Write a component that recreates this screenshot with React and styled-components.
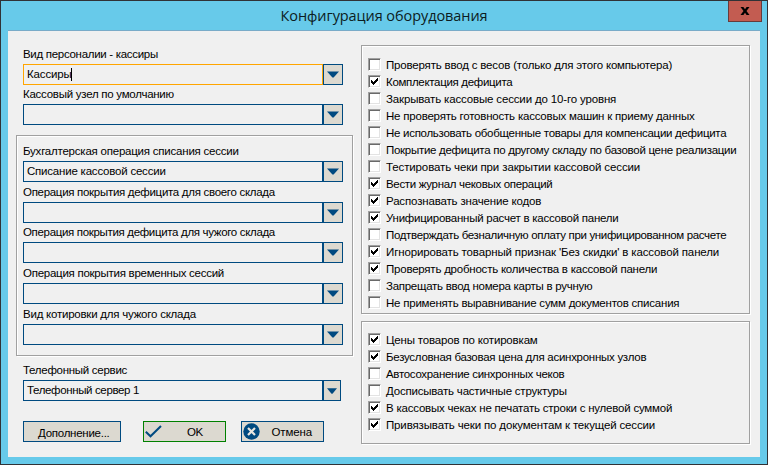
import React from 'react';
import styled, { createGlobalStyle } from 'styled-components';

const Global = createGlobalStyle`
  *, *::before, *::after { box-sizing: border-box; }
  html, body { margin: 0; padding: 0; overflow: hidden; }
`;

const Window = styled.div`
  display: flex;
  flex-direction: column;
  width: 768px;
  height: 465px;
  padding: 0 7px 7px;
  background: #67caea;
  border: 1px solid #303236;
  font: 11.5px/16px "Liberation Sans", Arial, sans-serif;
  color: #000;
`;

const TitleBar = styled.header`
  display: flex;
  justify-content: flex-end;
  align-items: flex-start;
  flex: none;
  height: 29px;
`;

const Title = styled.h1`
  flex: 1;
  margin: 0;
  padding: 4px 0 0 32px;
  text-align: center;
  font: 400 14.5px/22px "Open Sans", "Noto Sans", sans-serif;
  letter-spacing: -0.08px;
  color: #0c1c22;
`;

const CloseButton = styled.button`
  display: flex;
  align-items: center;
  justify-content: center;
  width: 34px;
  height: 21px;
  margin-right: -2px;
  padding: 0 0 1px;
  background: #c35c51;
  border: 1px solid #673b3c;
  border-top: 0;
`;

const Client = styled.main`
  display: flex;
  flex: 1;
  padding: 0 9px 0 8px;
  background: #f0f0f0;
  border-top: 1px solid #79abc8;
`;

const LeftColumn = styled.section`
  display: flex;
  flex-direction: column;
  width: 338px;
  margin-right: 7px;
  padding-top: 16px;
`;

const RightColumn = styled.section`
  display: flex;
  flex-direction: column;
  gap: 6px;
  width: 390px;
  padding-top: 14px;
`;

const FieldStack = styled.div`
  padding-left: 7px;
`;

const Frame = styled.div`
  border: 1px solid #a0a0a0;
  box-shadow: inset 1px 1px 0 #fff, 1px 1px 0 #fff;
`;

const FieldGroup = styled(Frame)`
  width: 337px;
  height: 221px;
  margin-top: 10px;
  padding: 8px 0 0 6px;
`;

const OptionGroup = styled(Frame)`
  width: 389px;
  height: ${(p) => p.$height}px;
  margin-bottom: 1px;
  padding: ${(p) => p.$top}px 0 0 6px;
`;

const Field = styled.div`
  margin-top: ${(p) => p.$gap ?? 3}px;
`;

const Text = styled.span`
  display: block;
  height: 16px;
  line-height: 16px;
  white-space: nowrap;
  letter-spacing: ${(p) => p.$track ?? 0}px;
`;

const Label = styled(Text)`
  margin-bottom: 1px;
  line-height: 14px;
`;

const OptionText = styled(Text)`
  line-height: 14px;
`;

const Combo = styled.div`
  display: flex;
  height: 21px;
`;

const Input = styled.div`
  display: flex;
  align-items: center;
  width: 300px;
  padding: 0 0 1px 3px;
  border: 1px solid ${(p) => (p.$focused ? '#ffa500' : '#004a80')};
`;

const Caret = styled.i`
  width: 1px;
  height: 13px;
  margin-left: -1px;
  background: #000;
`;

const DropButton = styled.button`
  display: flex;
  align-items: center;
  justify-content: center;
  width: ${(p) => (p.$narrow ? 18 : 20)}px;
  padding: 0;
  background: #dcd9d0;
  border: 1px solid #004a80;
`;

const Option = styled.label`
  display: flex;
  align-items: flex-start;
  height: 17px;
`;

const CheckBox = styled.span`
  width: 13px;
  height: 13px;
  margin-right: 5px;
  background: #fff;
  border: 1px solid;
  border-color: #a0a0a0 #fff #fff #a0a0a0;
  box-shadow: inset 1px 1px 0 #696969, inset -1px -1px 0 #e3e3e3;

  svg { display: block; }
`;

const Buttons = styled.div`
  display: flex;
  margin: 20px 0 0 7px;
`;

const PushButton = styled.button`
  display: flex;
  align-items: center;
  width: ${(p) => p.$width}px;
  height: 21px;
  margin-right: ${(p) => p.$after ?? 0}px;
  padding: ${(p) => (p.$down ? 3 : 1)}px 0 0 ${(p) => p.$indent}px;
  background: #dcd9d0;
  border: 1px solid ${(p) => (p.$accept ? '#008000' : '#004a80')};
  font: inherit;
  color: #000;
`;

const ButtonIcon = styled.svg`
  flex: none;
  display: block;
  margin: -1px ${(p) => p.$gap}px 0 0;
`;

const topFields = [
  { label: 'Вид персоналии - кассиры', track: -0.3, value: 'Кассиры', valueTrack: -0.15, focused: true, gap: 0 },
  { label: 'Кассовый узел по умолчанию', track: -0.26, gap: 2 },
];

const groupFields = [
  { label: 'Бухгалтерская операция списания сессии', track: -0.22, value: 'Списание кассовой сессии', valueTrack: -0.21, gap: 0 },
  { label: 'Операция покрытия дефицита для своего склада', track: -0.3, gap: 3 },
  { label: 'Операция покрытия дефицита для чужого склада', track: -0.33, gap: 2 },
  { label: 'Операция покрытия временных сессий', track: -0.26, gap: 3 },
  { label: 'Вид котировки для чужого склада', track: -0.23, gap: 3 },
];

const phoneField = {
  label: 'Телефонный сервис', track: -0.28, value: 'Телефонный сервер 1', valueTrack: -0.36, narrow: true, gap: 7,
};

const sessionOptions = [
  ['Проверять ввод с весов (только для этого компьютера)', false, -0.185],
  ['Комплектация дефицита', true, -0.32],
  ['Закрывать кассовые сессии до 10-го уровня', false, -0.155],
  ['Не проверять готовность кассовых машин к приему данных', false, -0.21],
  ['Не использовать обобщенные товары для компенсации дефицита', false, -0.285],
  ['Покрытие дефицита по другому складу по базовой цене реализации', false, -0.285],
  ['Тестировать чеки при закрытии кассовой сессии', false, -0.125],
  ['Вести журнал чековых операций', true, -0.32],
  ['Распознавать значение кодов', true, -0.16],
  ['Унифицированный расчет в кассовой панели', true, -0.245],
  ['Подтверждать безналичную оплату при унифицированном расчете', false, -0.345],
  ["Игнорировать товарный признак 'Без скидки' в кассовой панели", true, -0.14],
  ['Проверять дробность количества в кассовой панели', true, -0.225],
  ['Запрещать ввод номера карты в ручную', false, -0.275],
  ['Не применять выравнивание сумм документов списания', false, -0.22],
];

const priceOptions = [
  ['Цены товаров по котировкам', true, -0.17],
  ['Безусловная базовая цена для асинхронных узлов', true, -0.275],
  ['Автосохранение синхронных чеков', false, -0.31],
  ['Досписывать частичные структуры', false, -0.205],
  ['В кассовых чеках не печатать строки с нулевой суммой', true, -0.215],
  ['Привязывать чеки по документам к текущей сессии', true, -0.145],
];

function ComboField({ label, track, value, valueTrack, focused, narrow, gap }) {
  return (
    <Field $gap={gap}>
      <Label $track={track}>{label}</Label>
      <Combo>
        <Input $focused={focused}>
          {value && <Text $track={valueTrack}>{value}</Text>}
          {focused && <Caret />}
        </Input>
        <DropButton $narrow={narrow}>
          <svg width={narrow ? 10 : 12} height={narrow ? 6 : 7} viewBox="0 0 12 7" preserveAspectRatio="none">
            <path d="M0 0.4H12L6.6 6.6H5.4Z" fill="#004a80" />
          </svg>
        </DropButton>
      </Combo>
    </Field>
  );
}

function Options({ items }) {
  return items.map(([text, checked, track]) => (
    <Option key={text}>
      <CheckBox>
        {checked && (
          <svg width="11" height="11" viewBox="0 0 11 11" shapeRendering="crispEdges">
            <path d="M2 4h1v1h1v1h1v-1h1v-1h1v-1h1v-1h1v3h-1v1h-1v1h-1v1h-1v1h-1v-1h-1v-1h-1z" fill="#000" />
          </svg>
        )}
      </CheckBox>
      <OptionText $track={track}>{text}</OptionText>
    </Option>
  ));
}

export default function App() {
  return (
    <>
      <Global />
      <Window>
        <TitleBar>
          <Title>Конфигурация оборудования</Title>
          <CloseButton aria-label="Закрыть">
            <svg width="10" height="8" viewBox="0 0 10 8">
              <path d="M0.5 0H3.4L5 2.3L6.6 0H9.5L6.5 4L9.5 8H6.6L5 5.7L3.4 8H0.5L3.5 4Z" fill="#000" />
            </svg>
          </CloseButton>
        </TitleBar>
        <Client>
          <LeftColumn>
            <FieldStack>
              {topFields.map((f) => <ComboField key={f.label} {...f} />)}
            </FieldStack>
            <FieldGroup>
              {groupFields.map((f) => <ComboField key={f.label} {...f} />)}
            </FieldGroup>
            <FieldStack>
              <ComboField {...phoneField} />
            </FieldStack>
            <Buttons>
              <PushButton $width={98} $after={22} $indent={14} $down>
                <Text $track={-0.26}>Дополнение...</Text>
              </PushButton>
              <PushButton $width={83} $after={15} $indent={1} $accept>
                <ButtonIcon width="17" height="13" viewBox="0 0 17 13" $gap={25}>
                  <path d="M0.8 6.8L5.5 11.3L16 1" fill="none" stroke="#004a80" strokeWidth="2" />
                </ButtonIcon>
                <Text $track={-0.5}>OK</Text>
              </PushButton>
              <PushButton $width={83} $indent={1}>
                <ButtonIcon width="17" height="17" viewBox="0 0 17 17" $gap={11.5}>
                  <circle cx="8.5" cy="8.5" r="8.2" fill="#004a80" />
                  <path d="M5 5L12 12M12 5L5 12" stroke="#e8e6e0" strokeWidth="2.2" />
                </ButtonIcon>
                <Text $track={-0.1}>Отмена</Text>
              </PushButton>
            </Buttons>
          </LeftColumn>
          <RightColumn>
            <OptionGroup $height={269} $top={12}><Options items={sessionOptions} /></OptionGroup>
            <OptionGroup $height={123} $top={11}><Options items={priceOptions} /></OptionGroup>
          </RightColumn>
        </Client>
      </Window>
    </>
  );
}
